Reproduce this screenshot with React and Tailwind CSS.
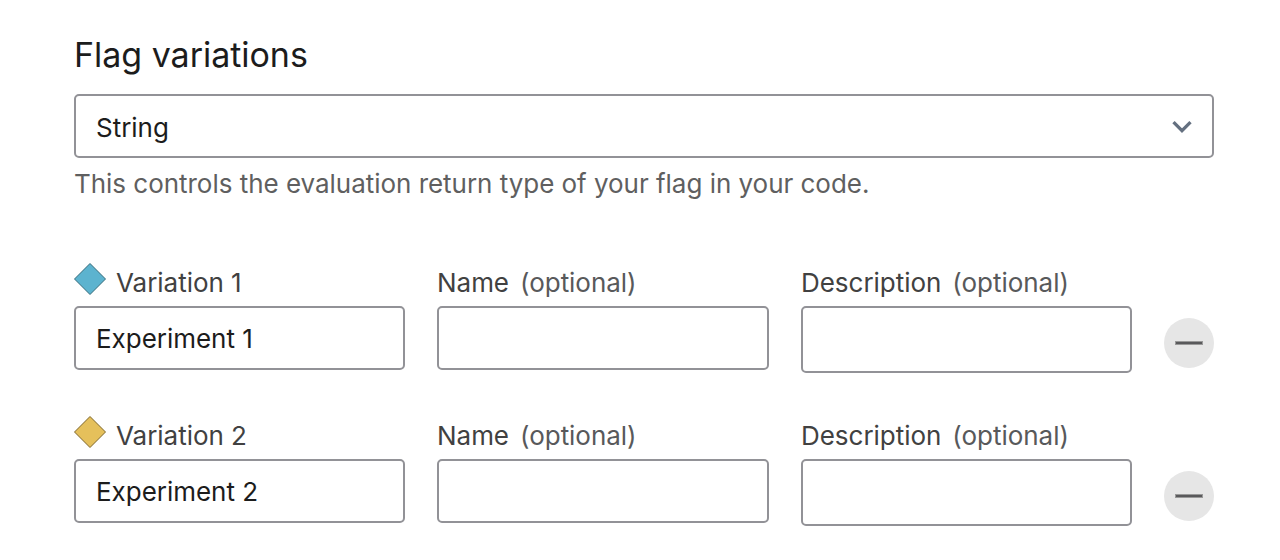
const box = "rounded-[5px] border-2 border-[#929297] bg-white text-[#1c1c1c]";

function Label({ children, optional }) {
  return (
    <div className="flex h-9 items-center gap-[11px] text-[26px] leading-9 text-[#414141] whitespace-nowrap">
      <span>{children}</span>
      {optional && <span className="text-[#58595b]">(optional)</span>}
    </div>
  );
}

function Variation({ number, color, stroke }) {
  return (
    <div className="flex h-[153px] items-start">
      <div className="w-[331px] shrink-0">
        <div className="flex h-[41px] items-start">
          <svg className="-mt-[2px] mr-[10px] h-8 w-8 shrink-0" viewBox="0 0 32 32">
            <path d="M16 .5 31.5 16 16 31.5.5 16Z" fill={color} stroke={stroke} strokeWidth="1" strokeLinejoin="round" />
          </svg>
          <Label>Variation {number}</Label>
        </div>
        <input readOnly className={`${box} block h-16 w-full px-5 text-[26px] outline-none`} value={`Experiment ${number}`} />
      </div>
      <div className="ml-8 w-[332px] shrink-0">
        <div className="h-[41px]"><Label optional>Name</Label></div>
        <input readOnly className={`${box} block h-16 w-full px-5 text-[26px] outline-none`} />
      </div>
      <div className="ml-8 w-[331px] shrink-0">
        <div className="h-[41px]"><Label optional>Description</Label></div>
        <textarea readOnly className={`${box} block h-[67px] w-full resize-none px-5 text-[26px] outline-none`} />
      </div>
      <button className="mt-[53px] ml-8 flex h-[50px] w-[50px] shrink-0 items-center justify-center rounded-full bg-[#e6e6e6]">
        <span className="h-1 w-7 border border-[#999999] bg-[#59595b]" />
      </button>
    </div>
  );
}

export default function App() {
  return (
    <main className="h-[560px] w-[1280px] overflow-hidden bg-white pr-[66px] pl-[74px] pt-[34px] font-['Inter',sans-serif] tracking-[-0.03px]">
      <h1 className="h-[60px] text-[34px] leading-[42px] text-[#1c1c1c]">Flag variations</h1>
      <div className={`${box} flex h-16 w-[1140px] items-center justify-between px-5 text-[26px]`}>
        <span className="pt-[3px]">String</span>
        <svg className="mt-px h-5 w-5" viewBox="0 0 20 20" fill="none">
          <path d="m1.5 5.2 8.5 8.5 8.5-8.5" stroke="#647080" strokeWidth="3.3" />
        </svg>
      </div>
      <p className="mt-2 h-[99px] text-[26px] leading-9 text-[#5f5f60]">This controls the evaluation return type of your flag in your code.</p>
      <Variation number={1} color="#5cb3cf" stroke="#356a7a" />
      <Variation number={2} color="#e5c05b" stroke="#7c6529" />
    </main>
  );
}
